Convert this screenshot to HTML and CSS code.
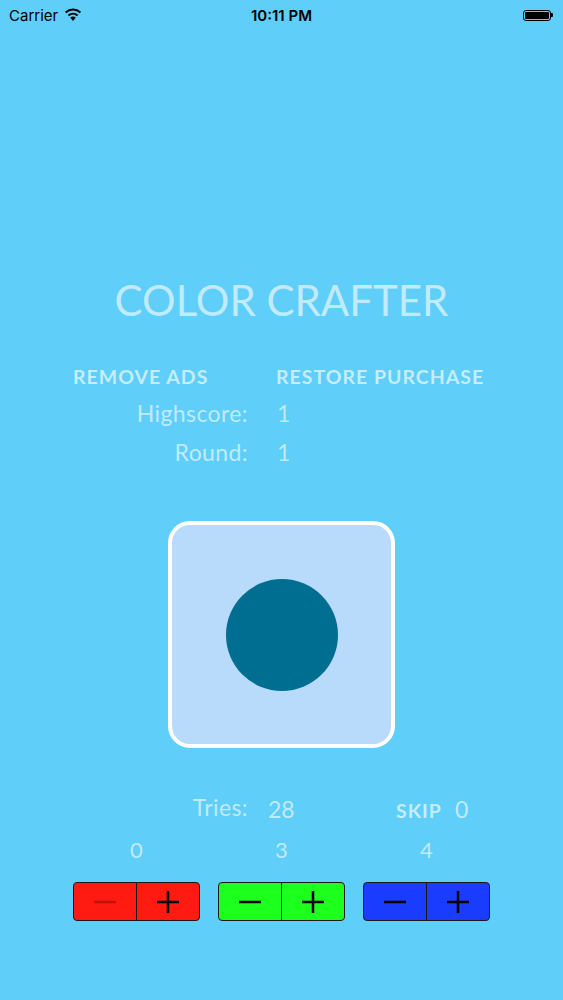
FILE: index.html
```html
<!DOCTYPE html>
<html>
<head>
<meta charset="utf-8">
<link rel="stylesheet" href="styles.css">
</head>
<body>
<div class="screen">
  <div class="statusbar">
    <div class="sb-left">
      <span class="carrier">Carrier</span>
      <svg class="wifi" width="18" height="13" viewBox="0 0 18 13">
        <path d="M9 13 L6.2 9.6 A4.4 4.4 0 0 1 11.8 9.6 Z" fill="#000"/>
        <path d="M4.4 7.4 A7.2 7.2 0 0 1 13.6 7.4" stroke="#000" stroke-width="2" fill="none"/>
        <path d="M1.6 4.4 A11 11 0 0 1 16.4 4.4" stroke="#000" stroke-width="2" fill="none"/>
      </svg>
    </div>
    <div class="sb-time">10:11 PM</div>
    <div class="sb-right">
      <div class="battery"><div class="battery-fill"></div></div>
      <div class="battery-tip"></div>
    </div>
  </div>

  <h1 class="title">COLOR CRAFTER</h1>

  <div class="info">
    <div class="link left">REMOVE ADS</div>
    <div class="link">RESTORE PURCHASE</div>
    <div class="label">Highscore:</div>
    <div class="value">1</div>
    <div class="label">Round:</div>
    <div class="value">1</div>
  </div>

  <div class="swatch-wrap">
    <div class="swatch">
      <div class="dot"></div>
    </div>
  </div>

  <div class="tries-row">
    <div class="tries-label">Tries:</div>
    <div class="tries-value">28</div>
    <div class="skip">SKIP</div>
    <div class="skip-value">0</div>
  </div>

  <div class="controls">
    <div class="channel">
      <div class="ch-value">0</div>
      <div class="stepper red">
        <div class="step minus disabled"><svg width="22" height="22" viewBox="0 0 22 22"><path d="M0 11 H22" /></svg></div>
        <div class="step plus"><svg width="22" height="22" viewBox="0 0 22 22"><path d="M0 11 H22 M11 0 V22" /></svg></div>
      </div>
    </div>
    <div class="channel">
      <div class="ch-value">3</div>
      <div class="stepper green">
        <div class="step minus"><svg width="22" height="22" viewBox="0 0 22 22"><path d="M0 11 H22" /></svg></div>
        <div class="step plus"><svg width="22" height="22" viewBox="0 0 22 22"><path d="M0 11 H22 M11 0 V22" /></svg></div>
      </div>
    </div>
    <div class="channel">
      <div class="ch-value">4</div>
      <div class="stepper blue">
        <div class="step minus"><svg width="22" height="22" viewBox="0 0 22 22"><path d="M0 11 H22" /></svg></div>
        <div class="step plus"><svg width="22" height="22" viewBox="0 0 22 22"><path d="M0 11 H22 M11 0 V22" /></svg></div>
      </div>
    </div>
  </div>
</div>
</body>
</html>
```

FILE: styles.css
```css
html, body {
  margin: 0;
  padding: 0;
}
body {
  background: #5fcef9;
  width: 563px;
  height: 1000px;
  overflow: hidden;
  font-family: "Lato", "Noto Sans", sans-serif;
  color: #bfebfd;
}
.screen {
  display: flex;
  flex-direction: column;
  width: 563px;
}
.statusbar {
  height: 30px;
  display: flex;
  align-items: center;
  justify-content: space-between;
  padding: 0 10px 0 9px;
  position: relative;
  font-family: "Inter", "Liberation Sans", sans-serif;
  color: #000;
  font-size: 15px;
}
.sb-left {
  display: flex;
  align-items: center;
  gap: 6px;
}
.wifi {
  margin-top: -1px;
}
.sb-time {
  position: absolute;
  left: 0;
  right: 0;
  text-align: center;
  font-weight: 600;
  pointer-events: none;
}
.sb-right {
  display: flex;
  align-items: center;
}
.battery {
  width: 28px;
  height: 11px;
  border: 1px solid #000;
  border-radius: 3px;
  padding: 1px;
  box-sizing: border-box;
  display: flex;
}
.battery-fill {
  flex: 1;
  background: #000;
  border-radius: 1px;
}
.battery-tip {
  width: 2px;
  height: 4px;
  background: #000;
  border-radius: 0 1px 1px 0;
}
.title {
  margin: 240px 0 0;
  font-weight: 400;
  font-size: 42px;
  line-height: 60px;
  text-align: center;
  letter-spacing: 0;
}
.info {
  margin-top: 28px;
  display: grid;
  grid-template-columns: 175px auto;
  column-gap: 28px;
  padding-left: 73px;
  grid-template-rows: 36px 38px 39px;
  align-items: center;
}
.link {
  font-weight: 700;
  font-size: 19.5px;
  letter-spacing: 1px;
  color: #c4edfd;
}
.link.left {
  text-align: left;
}
.label {
  text-align: right;
  font-size: 23px;
  letter-spacing: 0.4px;
}
.value {
  font-size: 23px;
  padding-left: 1px;
}
.swatch-wrap {
  display: flex;
  justify-content: center;
  margin-top: 50px;
}
.swatch {
  width: 227px;
  height: 227px;
  box-sizing: border-box;
  border: 4px solid #ffffff;
  border-radius: 22px;
  background: #b8dafb;
  display: flex;
  align-items: center;
  justify-content: center;
}
.dot {
  width: 112px;
  height: 112px;
  border-radius: 50%;
  background: #006e91;
}
.tries-row {
  margin-top: 45px;
  display: flex;
  align-items: baseline;
  height: 30px;
}
.tries-label {
  width: 248px;
  text-align: right;
  font-size: 23px;
  letter-spacing: 0.4px;
}
.tries-value {
  margin-left: 20px;
  width: 128px;
  font-size: 23px;
  position: relative;
  top: 2px;
}
.skip {
  font-weight: 700;
  font-size: 19.5px;
  letter-spacing: 1px;
  color: #c4edfd;
  position: relative;
  top: 2px;
}
.skip-value {
  margin-left: 13px;
  font-size: 23px;
  position: relative;
  top: 2px;
}
.controls {
  margin-top: 14px;
  display: grid;
  grid-template-columns: repeat(3, 127px);
  column-gap: 18px;
  padding-left: 73px;
}
.channel {
  display: flex;
  flex-direction: column;
  align-items: center;
}
.ch-value {
  font-size: 22px;
  line-height: 26px;
  margin-bottom: 19px;
}
.stepper {
  width: 127px;
  height: 39px;
  box-sizing: border-box;
  border: 1.5px solid #1a1a1a;
  border-radius: 4px;
  display: flex;
  overflow: hidden;
}
.stepper.red { background: #ff1a12; }
.stepper.green { background: #1dff1d; }
.stepper.blue { background: #1a3cff; }
.step {
  flex: 1;
  display: flex;
  align-items: center;
  justify-content: center;
}
.step svg path {
  stroke: #000;
  stroke-width: 2.5;
  fill: none;
}
.step.minus {
  border-right: 1.5px solid #1a1a1a;
}
.step.disabled svg path {
  stroke: rgba(0, 0, 0, 0.25);
}
```
